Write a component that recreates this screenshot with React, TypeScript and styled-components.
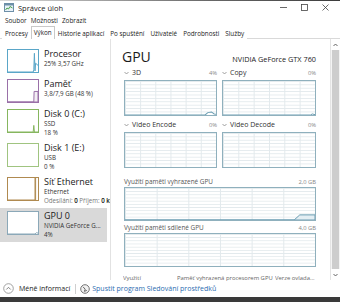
import React from 'react';
import styled, { createGlobalStyle } from 'styled-components';

const GlobalStyle = createGlobalStyle`
  html, body {
    margin: 0;
    padding: 0;
    width: 340px;
    height: 302px;
    overflow: hidden;
    background: #fff;
  }
  body {
    font-family: "Open Sans", "Noto Sans", "DejaVu Sans", sans-serif;
    color: #1e1e1e;
  }
`;

const Window = styled.div`
  width: 340px;
  height: 302px;
  display: flex;
  flex-direction: column;
  background: #fff;
`;

const TopEdge = styled.div`
  height: 1px;
  background: linear-gradient(to right, #d8d8d8, #6a6a6a 60%, #3c3c3c);
`;

const TitleBar = styled.div`
  height: 13px;
  display: flex;
  align-items: center;
  padding: 0 4px 0 4px;
`;

const TitleText = styled.span`
  font-size: 7.5px;
  margin-left: 4px;
  color: #222;
`;

const Controls = styled.div`
  margin-left: auto;
  display: flex;
`;

const ControlButton = styled.div`
  width: 21px;
  height: 13px;
  display: flex;
  align-items: center;
  justify-content: center;
`;

const MenuBar = styled.div`
  height: 12px;
  display: flex;
  align-items: center;
  gap: 4px;
  padding-left: 5px;
  font-size: 6.4px;
  color: #222;
`;

const TabBar = styled.div`
  height: 13px;
  display: flex;
  align-items: flex-end;
  padding-left: 2px;
  border-bottom: 1px solid #d9d9d9;
  box-sizing: border-box;
`;

const Tab = styled.div<{ $active?: boolean }>`
  line-height: 11px;
  padding: 0 2px;
  font-size: 6.3px;
  color: #222;
  box-sizing: border-box;
  border: 1px solid ${(p) => (p.$active ? '#c9c9c9' : 'transparent')};
  border-bottom: none;
  background: #fff;
  margin-bottom: -1px;
  height: ${(p) => (p.$active ? '13px' : '12px')};
`;

const Main = styled.div`
  flex: 1;
  min-height: 0;
  display: flex;
`;

const Sidebar = styled.div`
  width: 111px;
  box-sizing: border-box;
  border-right: 1px solid #e2e2e2;
  padding-top: 7px;
  overflow: hidden;
`;

const Item = styled.div<{ $selected?: boolean }>`
  display: flex;
  align-items: flex-start;
  gap: 5px;
  padding: 3px 0 3px 7px;
  margin-right: 3px;
  background: ${(p) => (p.$selected ? '#d9d9d9' : 'transparent')};
`;

const Thumb = styled.div<{ $color: string }>`
  position: relative;
  flex: none;
  width: 32px;
  height: 24px;
  box-sizing: border-box;
  border: 1px solid ${(p) => p.$color};
  background: #fff;
  svg {
    position: absolute;
    inset: 0;
    width: 100%;
    height: 100%;
  }
`;

const ItemText = styled.div`
  white-space: nowrap;
  min-width: 0;
`;

const ItemTitle = styled.div`
  font-size: 9px;
  line-height: 10px;
  color: #1a1a1a;
`;

const ItemSub = styled.div`
  font-size: 6.2px;
  line-height: 9px;
  color: #333;
  b {
    color: #111;
    font-weight: 600;
  }
  span {
    color: #777;
  }
`;

const Content = styled.div`
  flex: 1;
  min-width: 0;
  padding: 10px 14px 0 13px;
`;

const Header = styled.div`
  display: flex;
  align-items: baseline;
  justify-content: space-between;
  height: 16px;
  margin-bottom: 3px;
`;

const BigTitle = styled.div`
  font-size: 14px;
  line-height: 16px;
  margin-left: -2px;
  color: #1a1a1a;
`;

const Adapter = styled.div`
  font-size: 7.3px;
  color: #222;
`;

const SmallGrid = styled.div`
  display: grid;
  grid-template-columns: 93px 94px;
  column-gap: 5px;
`;

const Cell = styled.div`
  margin-bottom: 4px;
`;

const LabelRow = styled.div<{ $gap?: number }>`
  height: 9px;
  display: flex;
  align-items: center;
  gap: 3px;
  font-size: 6.4px;
  color: #555;
  margin-bottom: ${(p) => p.$gap ?? 3}px;
  white-space: nowrap;
`;

const LabelName = styled.span`
  font-size: 7px;
  color: #333;
`;

const LabelValue = styled.span`
  margin-left: auto;
  font-size: 5.8px;
  color: #888;
`;

const Graph = styled.div<{ $h: number; $cols: number }>`
  position: relative;
  height: ${(p) => p.$h}px;
  box-sizing: border-box;
  border: 1px solid #8fb0bd;
  background-color: #fff;
  background-image: linear-gradient(to right, #e2e9ec 1px, transparent 1px),
    linear-gradient(to bottom, #e2e9ec 1px, transparent 1px);
  background-size: calc(100% / ${(p) => p.$cols}) 100%, 100% calc(100% / 10);
  svg {
    position: absolute;
    inset: 0;
    width: 100%;
    height: 100%;
  }
`;

const BigSection = styled.div`
  margin-top: 5px;
  & + & {
    margin-top: 2px;
  }
`;

const StatsRow = styled.div`
  display: flex;
  margin-top: 7px;
  font-size: 5.9px;
  color: #666;
  white-space: nowrap;
`;

const Stat = styled.div<{ $w: number }>`
  width: ${(p) => p.$w}px;
  flex: none;
  overflow: hidden;
  margin-left: -1px;
`;

const Scrollbar = styled.div`
  width: 10px;
  box-sizing: border-box;
  border-left: 1px solid #e4e4e4;
  display: flex;
  flex-direction: column;
  background: #f4f4f4;
`;

const ScrollArrow = styled.div`
  height: 11px;
  display: flex;
  align-items: center;
  justify-content: center;
  background: #fff;
`;

const ScrollThumb = styled.div`
  flex: 1;
  margin: 0 1px;
  background: #cdcdcd;
`;

const Footer = styled.div`
  height: 17px;
  display: flex;
  align-items: center;
  padding-left: 3px;
  font-size: 7px;
  color: #222;
`;

const FooterButton = styled.div`
  display: flex;
  align-items: center;
  gap: 5px;
`;

const Separator = styled.div`
  width: 1px;
  height: 10px;
  background: #cfcfcf;
  margin: 0 4px 0 5px;
`;

const Link = styled.div`
  display: flex;
  align-items: center;
  gap: 2px;
  color: #2b6cb0;
`;

const BottomEdge = styled.div`
  height: 5px;
  background: #3a3a3a;
`;

const Chevron = () => (
  <svg width="5" height="4" viewBox="0 0 5 4">
    <path d="M0.5 1 L2.5 3 L4.5 1" fill="none" stroke="#888" strokeWidth="0.8" />
  </svg>
);

type Side = {
  title: string;
  subs: React.ReactNode[];
  color: string;
  line?: string;
  fill?: string;
  selected?: boolean;
};

const sideItems: Side[] = [
  { title: 'Procesor', subs: ['25% 3,57 GHz'], color: '#5aa6c8', line: '0,100 84,100 86,90 88,15 90,95 92,60 100,70' },
  { title: 'Paměť', subs: ['3,8/7,9 GB (48 %)'], color: '#9a70a8', fill: '0,100 86,100 87,52 100,52 100,100' },
  { title: 'Disk 0 (C:)', subs: ['SSD', '18 %'], color: '#86b65e', line: '0,100 84,100 86,70 88,100 100,100' },
  { title: 'Disk 1 (E:)', subs: ['USB', '0 %'], color: '#a0c480' },
  {
    title: 'Síť Ethernet',
    subs: [
      'Ethernet',
      <>
        <span>Odesílání:</span> <b>0</b> <span>Příjem:</span> <b>0 kt</b>
      </>,
    ],
    color: '#b08a50',
    line: '0,100 90,100 90,0 92,0 92,100',
  },
  { title: 'GPU 0', subs: ['NVIDIA GeForce G...', '4%'], color: '#8ba8b8', line: '0,100 90,100 95,94 100,96', selected: true },
];

const Spark = ({ line, fill, color }: { line?: string; fill?: string; color: string }) => (
  <svg viewBox="0 0 100 100" preserveAspectRatio="none">
    {fill && (
      <polygon
        points={fill}
        fill={color}
        fillOpacity="0.12"
        stroke={color}
        strokeWidth="1"
        vectorEffect="non-scaling-stroke"
      />
    )}
    {line && <polyline points={line} fill="none" stroke={color} strokeWidth="1" vectorEffect="non-scaling-stroke" />}
  </svg>
);

const small = [
  { name: '3D', value: '4%', line: '0,100 88,100 91,93 95,91 98,97 100,98' },
  { name: 'Copy', value: '0%', line: '0,100 95,100 97,97 100,99' },
  { name: 'Video Encode', value: '0%' },
  { name: 'Video Decode', value: '0%' },
];

export default function App() {
  return (
    <>
      <GlobalStyle />
      <Window>
        <TopEdge />
        <TitleBar>
          <svg width="10" height="9" viewBox="0 0 10 9">
            <rect x="0.5" y="0.5" width="9" height="8" fill="#e8f1f8" stroke="#6d8fa8" />
            <rect x="0.5" y="0.5" width="9" height="2" fill="#6d8fa8" />
            <polyline points="1.5,7 3,5 4.5,6 6,3.5 8.5,5" fill="none" stroke="#3a9a3a" strokeWidth="0.9" />
          </svg>
          <TitleText>Správce úloh</TitleText>
          <Controls>
            <ControlButton>
              <svg width="7" height="7" viewBox="0 0 7 7">
                <line x1="0" y1="3.5" x2="7" y2="3.5" stroke="#444" strokeWidth="0.8" />
              </svg>
            </ControlButton>
            <ControlButton>
              <svg width="7" height="7" viewBox="0 0 7 7">
                <rect x="0.5" y="0.5" width="6" height="6" fill="none" stroke="#444" strokeWidth="0.8" />
              </svg>
            </ControlButton>
            <ControlButton>
              <svg width="7" height="7" viewBox="0 0 7 7">
                <path d="M0.5 0.5 L6.5 6.5 M6.5 0.5 L0.5 6.5" stroke="#444" strokeWidth="0.8" />
              </svg>
            </ControlButton>
          </Controls>
        </TitleBar>
        <MenuBar>
          <span>Soubor</span>
          <span>Možnosti</span>
          <span>Zobrazit</span>
        </MenuBar>
        <TabBar>
          <Tab>Procesy</Tab>
          <Tab $active>Výkon</Tab>
          <Tab>Historie aplikací</Tab>
          <Tab>Po spuštění</Tab>
          <Tab>Uživatelé</Tab>
          <Tab>Podrobnosti</Tab>
          <Tab>Služby</Tab>
        </TabBar>
        <Main>
          <Sidebar>
            {sideItems.map((it) => (
              <Item key={it.title} $selected={it.selected}>
                <Thumb $color={it.color}>
                  <Spark line={it.line} fill={it.fill} color={it.color} />
                </Thumb>
                <ItemText>
                  <ItemTitle>{it.title}</ItemTitle>
                  {it.subs.map((s, i) => (
                    <ItemSub key={i}>{s}</ItemSub>
                  ))}
                </ItemText>
              </Item>
            ))}
          </Sidebar>
          <Content>
            <Header>
              <BigTitle>GPU</BigTitle>
              <Adapter>NVIDIA GeForce GTX 760</Adapter>
            </Header>
            <SmallGrid>
              {small.map((g) => (
                <Cell key={g.name}>
                  <LabelRow>
                    <Chevron />
                    <LabelName>{g.name}</LabelName>
                    <LabelValue>{g.value}</LabelValue>
                  </LabelRow>
                  <Graph $h={36} $cols={6}>
                    {g.line && (
                      <svg viewBox="0 0 100 100" preserveAspectRatio="none">
                        <polyline points={g.line} fill="none" stroke="#6a9db2" strokeWidth="1" vectorEffect="non-scaling-stroke" />
                      </svg>
                    )}
                  </Graph>
                </Cell>
              ))}
            </SmallGrid>
            <BigSection>
              <LabelRow $gap={1}>
                <span>Využití paměti vyhrazené GPU</span>
                <LabelValue>2,0 GB</LabelValue>
              </LabelRow>
              <Graph $h={34} $cols={6}>
                <svg viewBox="0 0 100 100" preserveAspectRatio="none">
                  <polygon
                    points="0,100 89,100 92,84 100,84 100,100"
                    fill="#e3eef3"
                    stroke="#6a9db2"
                    strokeWidth="1"
                    vectorEffect="non-scaling-stroke"
                  />
                </svg>
              </Graph>
            </BigSection>
            <BigSection>
              <LabelRow $gap={1}>
                <span>Využití paměti sdílené GPU</span>
                <LabelValue>4,0 GB</LabelValue>
              </LabelRow>
              <Graph $h={34} $cols={6} />
            </BigSection>
            <StatsRow>
              <Stat $w={55}>Využití</Stat>
              <Stat $w={99}>Paměť vyhrazená procesorem GPU</Stat>
              <Stat $w={40}>Verze ovlada...</Stat>
            </StatsRow>
          </Content>
          <Scrollbar>
            <ScrollArrow>
              <svg width="5" height="4" viewBox="0 0 5 4">
                <path d="M0.5 3 L2.5 1 L4.5 3" fill="none" stroke="#555" strokeWidth="0.9" />
              </svg>
            </ScrollArrow>
            <ScrollThumb />
            <ScrollArrow>
              <svg width="5" height="4" viewBox="0 0 5 4">
                <path d="M0.5 1 L2.5 3 L4.5 1" fill="none" stroke="#555" strokeWidth="0.9" />
              </svg>
            </ScrollArrow>
          </Scrollbar>
        </Main>
        <Footer>
          <FooterButton>
            <svg width="11" height="11" viewBox="0 0 11 11">
              <circle cx="5.5" cy="5.5" r="4.8" fill="none" stroke="#8a8a8a" strokeWidth="0.8" />
              <path d="M3.3 6.5 L5.5 4.3 L7.7 6.5" fill="none" stroke="#666" strokeWidth="0.8" />
            </svg>
            <span>Méně informací</span>
          </FooterButton>
          <Separator />
          <Link>
            <svg width="10" height="10" viewBox="0 0 10 10">
              <circle cx="5" cy="5" r="4.3" fill="#f2f2f2" stroke="#666" strokeWidth="0.9" />
              <path d="M3 2.8 L5.2 5.2 L4.4 7.4 L6.8 6.4" fill="none" stroke="#555" strokeWidth="0.9" />
            </svg>
            <span>Spustit program Sledování prostředků</span>
          </Link>
        </Footer>
        <BottomEdge />
      </Window>
    </>
  );
}
